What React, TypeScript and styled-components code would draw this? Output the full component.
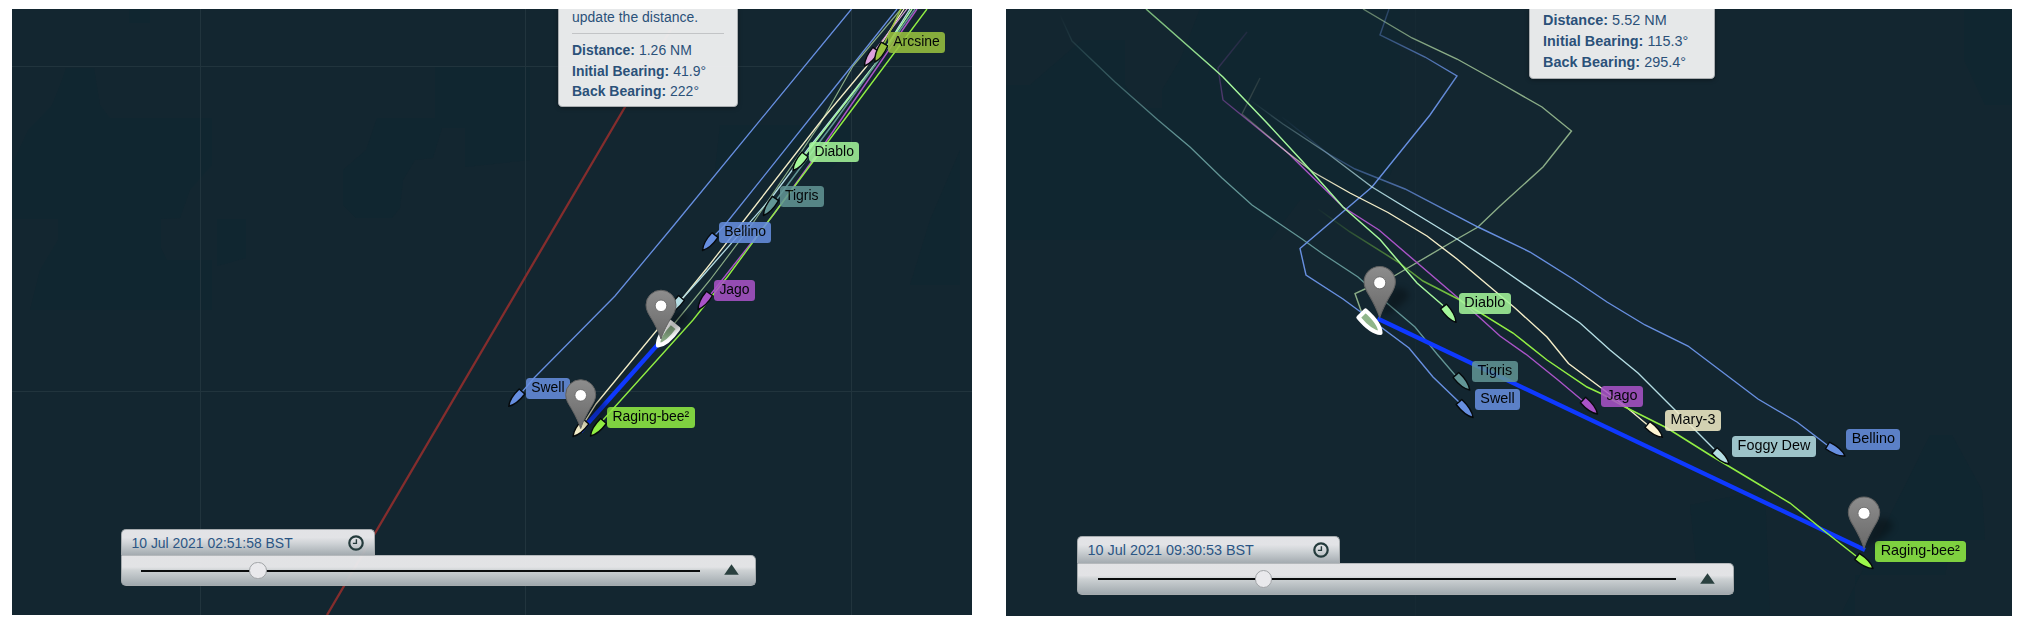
import React from "react";
import styled, { createGlobalStyle } from "styled-components";

const GlobalStyle = createGlobalStyle`
  body { margin: 0; background: #fff; }
  #root { font-family: "Liberation Sans", Arial, sans-serif; }
`;

type Point = [number, number];

interface Track {
  color: string;
  points: Point[];
  width?: number;
  fade?: [Point, Point];
  from?: number;
}

interface Boat {
  tip: Point;
  tail: Point;
  color: string;
  selected?: boolean;
}

interface Tag {
  name: string;
  x: number;
  y: number;
  w: number;
  color: string;
}

interface MapData {
  id: string;
  origin: Point;
  width: number;
  height: number;
  font: number;
  tagHeight: number;
  grid: { x: number[]; y: number[]; opacity: number };
  land: string[];
  tracks: Track[];
  ruler: [Point, Point];
  boats: Boat[];
  tags: Tag[];
  pins: Point[];
  pinScale: number;
  popup: { x: number; width: number; height: number; line: number; note?: string; rows: [string, string][] };
  timeline: { x: number; y: number; width: number; tab: number; tabHeight: number; barHeight: number; inset: number; trackEnd: number; knob: number; time: string };
}

const C = {
  blue: "#678fe0",
  cream: "#f3edc8",
  sage: "#8bad87",
  ice: "#b4dde3",
  mint: "#a5f79b",
  teal: "#629595",
  purple: "#aa53c8",
  lime: "#91ee43",
  olive: "#99c23f",
  pink: "#dda1dc",
};

const leftMap: MapData = {
  id: "west",
  origin: [12, 9],
  width: 960,
  height: 606,
  font: 13.95,
  tagHeight: 20.5,
  grid: { x: [200.5, 525.5, 851.5], y: [66.5, 391.5], opacity: 0.85 },
  land: [
    "M62 80 L66 68 H94 L100 105 L110 118 H212 V165 L190 190 L180 218 L161 219 V248 L167 260 H212 V310 H30 L40 270 L58 240 V219 H12 V165 L28 130 L40 118 L52 105Z",
    "M217 219 H246 V258 L217 266Z",
    "M377 118 H435 V67 H530 V160 L465 167 V128 L442 128 L433 158 L415 160 L403 180 L400 208 L392 218 H356 L343 205 V170 L366 150Z",
    "M129 9 H150 V23 H129Z",
    "M720 125 H850 V150 L830 170 H715Z M930 220 L960 150 V285 H910Z",
  ],
  tracks: [
    { color: "#842d2d", width: 2.3, points: [[683, 9], [625, 107], [327, 615]] },
    { color: C.blue, width: 1.3, points: [[851.5, 9], [670, 230], [615, 296], [534, 378], [522, 392]] },
    { color: C.blue, width: 1.3, points: [[897, 9], [847, 72], [724, 226], [715, 235]] },
    { color: C.sage, width: 1.2, points: [[901, 9], [853, 66], [820, 124], [753, 223], [710, 280], [674, 324]] },
    { color: C.cream, width: 1.3, points: [[904, 9], [866, 67], [821, 121], [742, 223], [707, 268], [657, 330], [596, 404], [584, 423]] },
    { color: C.pink, width: 1.2, points: [[907, 9], [875, 50]] },
    { color: C.olive, width: 1.5, points: [[901, 9], [884, 44]] },
    { color: C.ice, width: 1.3, points: [[910, 9], [876, 63], [808, 149], [772, 197], [700, 279], [681, 300]] },
    { color: C.mint, width: 1.4, points: [[912, 9], [874, 66], [805, 155]] },
    { color: C.teal, width: 1.5, points: [[915, 9], [833, 124], [777, 199]] },
    { color: C.purple, width: 1.4, points: [[917, 9], [825, 143], [774, 214], [711, 294]] },
    { color: C.lime, width: 1.4, points: [[927, 9], [827, 143], [767, 223], [728, 276], [693, 320], [603, 420]] },
  ],
  ruler: [[580.5, 431.5], [660, 342]],
  boats: [
    { tip: [864.5, 66], tail: [876, 49.5], color: C.pink },
    { tip: [875, 62], tail: [884.5, 44], color: C.olive },
    { tip: [793, 170.5], tail: [805, 154.5], color: C.mint },
    { tip: [763.5, 215.5], tail: [775.5, 198.5], color: C.teal },
    { tip: [702.5, 250.5], tail: [715, 235], color: C.blue },
    { tip: [698, 309.5], tail: [709.5, 293.5], color: C.purple },
    { tip: [668, 314], tail: [681.5, 298], color: C.ice },
    { tip: [658, 345.5], tail: [674.5, 325.5], color: C.sage, selected: true },
    { tip: [573, 436.5], tail: [586, 421.5], color: C.cream },
    { tip: [590.5, 436], tail: [603.5, 421], color: C.lime },
    { tip: [508.7, 406.3], tail: [522, 391.5], color: C.blue },
  ],
  tags: [
    { name: "Arcsine", x: 888, y: 32.3, w: 57, color: C.olive },
    { name: "Diablo", x: 809, y: 141.8, w: 50.3, color: C.mint },
    { name: "Tigris", x: 779.5, y: 186.2, w: 44.5, color: C.teal },
    { name: "Bellino", x: 719, y: 222, w: 52.3, color: C.blue },
    { name: "Jago", x: 714, y: 280, w: 41, color: C.purple },
    { name: "Swell", x: 526, y: 378, w: 43.8, color: C.blue },
    { name: "Raging-bee²", x: 607, y: 407.2, w: 87.8, color: C.lime },
  ],
  pins: [[661, 339], [580.7, 428.5]],
  pinScale: 1,
  popup: {
    x: 558,
    width: 180,
    height: 98,
    line: 20.2,
    note: "update the distance.",
    rows: [["Distance:", "1.26 NM"], ["Initial Bearing:", "41.9°"], ["Back Bearing:", "222°"]],
  },
  timeline: { x: 121, y: 529, width: 635, tab: 254, tabHeight: 26, barHeight: 31, inset: 19, trackEnd: 559, knob: 117, time: "10 Jul 2021 02:51:58 BST" },
};

const rightMap: MapData = {
  id: "east",
  origin: [1006, 9],
  width: 1006,
  height: 607,
  font: 14.4,
  tagHeight: 21,
  grid: { x: [1415.5], y: [], opacity: 0.2 },
  land: [
    "M1082 40 H1125 V85 L1140 108 H1162 V90 L1180 60 L1200 9 H1400 V150 L1380 200 H1300 L1270 240 H1006 V85 H1030Z",
    "M1964 60 V9 H2012 V105 H1985Z",
    "M1930 435 H1952 L1982 490 L1985 540 H1952 L1945 575 H1855 V615 H1770 L1765 490 L1690 505 L1700 600 H1740 V616 H1840Z",
  ],
  tracks: [
    { color: C.teal, width: 1.3, fade: [[1060, 13], [1180, 138]], points: [[1060, 15], [1072, 41], [1115, 82], [1158, 120], [1190, 147], [1222, 178], [1252, 205], [1302, 239], [1323, 254], [1358, 277], [1388, 304], [1415, 327], [1437, 354], [1455, 375]] },
    { color: C.sage, width: 1.4, fade: [[1300, -50], [1440, 50]], from: 0.3, points: [[1363, 9], [1412, 38], [1457, 59], [1500, 83], [1542, 107], [1571.5, 131], [1543, 167], [1500, 206], [1478, 227], [1457, 239], [1395, 275.5], [1365, 289], [1355, 293.5], [1361.5, 312]] },
    { color: C.blue, width: 1.4, fade: [[1385, 5], [1450, 100]], from: 0.25, points: [[1389, 9], [1380, 35], [1425, 57], [1457, 76], [1430, 115], [1372, 187], [1300, 248.5], [1306, 275], [1343, 299], [1360, 311.5], [1409, 348], [1433, 377], [1459, 402]] },
    { color: C.purple, width: 1.4, fade: [[1225, 25], [1295, 160]], points: [[1247, 32], [1218, 68], [1223, 100], [1288, 153], [1343, 207], [1379, 230], [1457, 297], [1500, 336], [1527, 355], [1558, 380], [1583, 401]] },
    { color: C.cream, width: 1.4, fade: [[1240, 75], [1345, 190]], points: [[1260, 78], [1242, 114], [1288, 153], [1313, 172], [1350, 193], [1388, 212.5], [1427, 236], [1457, 259], [1515, 308], [1547, 337], [1568.5, 363.5], [1602, 388.5], [1625, 406], [1647, 424.5]] },
    { color: C.ice, width: 1.4, fade: [[1250, 98], [1400, 205]], points: [[1250, 100], [1283, 124], [1327, 153], [1372, 187], [1457, 239], [1500, 267.5], [1580, 323], [1610, 350], [1638, 373], [1667, 402], [1714, 449]] },
    { color: C.blue, width: 1.4, fade: [[1280, 115], [1470, 210]], points: [[1282, 117], [1327, 153], [1355, 169], [1405, 189], [1478, 227], [1530, 252], [1573, 279], [1607, 302], [1645, 325], [1688, 346], [1758, 399], [1797, 422], [1827, 445]] },
    { color: C.mint, width: 1.5, fade: [[1050, -60], [1225, 80]], from: 0.3, points: [[1146, 9], [1213, 68], [1223, 77], [1267, 123], [1303, 162], [1343, 207], [1380, 239.5], [1417, 283], [1443, 305.5]] },
    { color: C.lime, width: 1.5, fade: [[1316, 207], [1480, 325]], points: [[1318, 209], [1350, 232], [1398, 262], [1423, 281], [1458, 299], [1513, 333], [1547, 360], [1587, 387], [1602, 394], [1625, 407], [1667, 428], [1710, 455], [1760, 485], [1790, 503], [1823, 530], [1856, 556]] },
  ],
  ruler: [[1377.5, 318.5], [1865, 550]],
  boats: [
    { tip: [1380.5, 333], tail: [1362, 314], color: "#8fb58a", selected: true },
    { tip: [1456, 322.3], tail: [1443.5, 306.5], color: C.mint },
    { tip: [1469.7, 390], tail: [1456, 375], color: C.teal },
    { tip: [1473, 417.5], tail: [1459, 402], color: C.blue },
    { tip: [1597.5, 414], tail: [1583, 400], color: C.purple },
    { tip: [1662.5, 437.3], tail: [1647.5, 424.5], color: "#fdf5d3" },
    { tip: [1729, 464], tail: [1714.5, 450.5], color: C.ice },
    { tip: [1845, 456], tail: [1827.5, 445.5], color: C.blue },
    { tip: [1873, 568.5], tail: [1857, 556.5], color: "#9cf84c" },
  ],
  tags: [
    { name: "Diablo", x: 1459, y: 293, w: 51.5, color: C.mint },
    { name: "Tigris", x: 1472, y: 361, w: 45.7, color: C.teal },
    { name: "Swell", x: 1475, y: 389, w: 45, color: C.blue },
    { name: "Jago", x: 1601, y: 386, w: 42, color: C.purple },
    { name: "Mary-3", x: 1665, y: 410, w: 56, color: "#f3edc8" },
    { name: "Foggy Dew", x: 1732, y: 436, w: 84, color: C.ice },
    { name: "Bellino", x: 1846.3, y: 429.3, w: 54, color: C.blue },
    { name: "Raging-bee²", x: 1875, y: 541, w: 90.5, color: C.lime },
  ],
  pins: [[1379.7, 317.5], [1864, 548]],
  pinScale: 1.045,
  popup: {
    x: 1529,
    width: 186,
    height: 69.5,
    line: 21,
    rows: [["Distance:", "5.52 NM"], ["Initial Bearing:", "115.3°"], ["Back Bearing:", "295.4°"]],
  },
  timeline: { x: 1077, y: 536, width: 657, tab: 263, tabHeight: 27, barHeight: 32, inset: 20, trackEnd: 578, knob: 165.5, time: "10 Jul 2021 09:30:53 BST" },
};

const Page = styled.main`
  display: flex;
  align-items: flex-start;
  gap: 34px;
  box-sizing: border-box;
  width: 2018px;
  height: 620px;
  padding: 9px 6px 0 12px;
  overflow: hidden;
`;

const MapPanel = styled.section<{ $w: number; $h: number; $font: number }>`
  position: relative;
  flex: none;
  width: ${(p) => p.$w}px;
  height: ${(p) => p.$h}px;
  overflow: hidden;
  background: #132630;
  font-size: ${(p) => p.$font}px;
`;

const Chart = styled.svg`
  position: absolute;
  inset: 0;
  display: block;
  width: 100%;
  height: 100%;
`;

const BoatTag = styled.span<{ $x: number; $y: number; $w: number; $h: number; $color: string }>`
  position: absolute;
  left: ${(p) => p.$x}px;
  top: ${(p) => p.$y}px;
  display: flex;
  justify-content: center;
  box-sizing: border-box;
  width: ${(p) => p.$w}px;
  height: ${(p) => p.$h}px;
  line-height: ${(p) => p.$h - 1.5}px;
  border-radius: 3.5px;
  background: ${(p) => p.$color};
  color: #000;
  white-space: nowrap;
  opacity: 0.86;
`;

const Popup = styled.aside<{ $x: number; $w: number; $h: number; $line: number }>`
  position: absolute;
  top: 0;
  left: ${(p) => p.$x}px;
  display: flex;
  flex-direction: column;
  justify-content: flex-end;
  box-sizing: border-box;
  width: ${(p) => p.$w}px;
  height: ${(p) => p.$h}px;
  padding: 0 13px 5px;
  border: 1px solid #a9adb0;
  border-top: 0;
  border-bottom-width: 1.5px;
  border-radius: 0 0 4.5px 4.5px;
  background: rgba(237, 238, 239, 0.97);
  box-shadow: 0 1px 4px rgba(0, 0, 0, 0.35);
  color: #2b5179;
  line-height: ${(p) => p.$line}px;
  letter-spacing: 0.03px;
  white-space: nowrap;
`;

const PopupNote = styled.div`
  margin-bottom: 6.4px;
  padding-bottom: 5.5px;
  border-bottom: 1px solid #c2c4c6;
`;

const Timeline = styled.div<{ $x: number; $y: number; $w: number }>`
  position: absolute;
  left: ${(p) => p.$x}px;
  top: ${(p) => p.$y}px;
  display: flex;
  flex-direction: column;
  align-items: flex-start;
  width: ${(p) => p.$w}px;
`;

const TimeTab = styled.div<{ $w: number; $h: number }>`
  display: flex;
  align-items: center;
  justify-content: space-between;
  box-sizing: border-box;
  width: ${(p) => p.$w}px;
  height: ${(p) => p.$h}px;
  padding: 0 10px 0 9.5px;
  border: 1px solid #a6abae;
  border-bottom: 0;
  border-radius: 5px 5px 0 0;
  background: linear-gradient(rgba(233, 233, 236, 0.97) 30%, rgba(211, 215, 218, 0.97) 55%, rgba(168, 175, 180, 0.97));
  color: #2b5584;
`;

const SliderBar = styled.div<{ $h: number; $inset: number }>`
  display: flex;
  align-items: center;
  box-sizing: border-box;
  width: 100%;
  height: ${(p) => p.$h}px;
  padding-left: ${(p) => p.$inset}px;
  border: 1px solid #a6abae;
  border-top: 1.5px solid #b5b9bc;
  border-radius: 0 5px 5px 5px;
  background: linear-gradient(rgba(233, 233, 235, 0.97) 38%, rgba(211, 215, 217, 0.97) 50%, rgba(165, 173, 178, 0.97));
`;

const SliderTrack = styled.div<{ $w: number }>`
  display: flex;
  align-items: center;
  width: ${(p) => p.$w}px;
  height: 2px;
  background: #0a0c0d;
`;

const Knob = styled.i<{ $left: number }>`
  box-sizing: border-box;
  width: 17.5px;
  height: 17.5px;
  margin-left: ${(p) => p.$left - 8.7}px;
  flex: none;
  border: 1px solid #a0a3a6;
  border-radius: 50%;
  background: #e9e9ec;
`;

const Expand = styled.svg`
  display: block;
  width: 15px;
  height: 11px;
  margin: 0 0 2px 23.5px;
`;

const Clock = styled.svg`
  display: block;
  width: 16px;
  height: 16px;
`;

const toPath = (pts: Point[]) => "M" + pts.map((p) => p.join(" ")).join("L");

function BoatMark({ boat }: { boat: Boat }) {
  const dx = boat.tip[0] - boat.tail[0];
  const dy = boat.tip[1] - boat.tail[1];
  const angle = (Math.atan2(dy, dx) * 180) / Math.PI;
  const len = Math.hypot(dx, dy);
  const half = boat.selected ? 5 : 3.8;
  const d = `M0 0 C-4 ${-half * 0.75} ${-len * 0.5} ${-half * 1.2} ${-len} ${-half} V${half} C${-len * 0.5} ${half * 1.2} -4 ${half * 0.75} 0 0Z`;
  return (
    <path
      d={d}
      transform={`translate(${boat.tip[0]} ${boat.tip[1]}) rotate(${angle})`}
      fill={boat.color}
      stroke={boat.selected ? "#fff" : "#05090b"}
      strokeWidth={boat.selected ? 4.2 : 1.4}
      strokeLinejoin="round"
    />
  );
}

function TrackLine({ track, id }: { track: Track; id: string }) {
  const { fade } = track;
  return (
    <>
      {fade && (
        <linearGradient id={id} gradientUnits="userSpaceOnUse" x1={fade[0][0]} y1={fade[0][1]} x2={fade[1][0]} y2={fade[1][1]}>
          <stop offset="0" stopColor={track.color} stopOpacity={track.from ?? 0} />
          <stop offset="1" stopColor={track.color} />
        </linearGradient>
      )}
      <path d={toPath(track.points)} fill="none" stroke={fade ? `url(#${id})` : track.color} strokeWidth={track.width ?? 1} />
    </>
  );
}

function RaceMap({ data }: { data: MapData }) {
  const [ox, oy] = data.origin;
  const view = `${ox} ${oy} ${data.width} ${data.height}`;
  const { popup, timeline } = data;
  const raised = data.id === "east" ? data.tracks.slice(-1) : [];
  const base = data.id === "east" ? data.tracks.slice(0, -1) : data.tracks;
  return (
    <MapPanel $w={data.width} $h={data.height} $font={data.font}>
      <Chart viewBox={view}>
        {data.land.map((d) => (
          <path key={d} d={d} fill="#0f2631" opacity="0.6" />
        ))}
        <g stroke="#243740" strokeWidth="1" opacity={data.grid.opacity}>
          {data.grid.x.map((x) => (
            <line key={x} x1={x} x2={x} y1={oy} y2={oy + data.height} />
          ))}
          {data.grid.y.map((y) => (
            <line key={y} x1={ox} x2={ox + data.width} y1={y} y2={y} />
          ))}
        </g>
        {base.map((t, i) => (
          <TrackLine key={i} track={t} id={`${data.id}-${i}`} />
        ))}
        <path d={toPath(data.ruler)} stroke="#0f39ff" strokeWidth="4.3" />
        {raised.map((t, i) => (
          <TrackLine key={i} track={t} id={`${data.id}-top-${i}`} />
        ))}
        {data.boats.map((b, i) => (
          <BoatMark key={i} boat={b} />
        ))}
      </Chart>
      {data.tags.map((t) => (
        <BoatTag key={t.name} $x={t.x - ox} $y={t.y - oy} $w={t.w} $h={data.tagHeight} $color={t.color}>
          {t.name}
        </BoatTag>
      ))}
      <Chart viewBox={view}>
        <defs>
          <linearGradient id={`${data.id}-pin`} x1="0" y1="0" x2="0" y2="1">
            <stop offset="0" stopColor="#8d8d8d" />
            <stop offset="1" stopColor="#696969" />
          </linearGradient>
          <filter id={`${data.id}-soft`} x="-50%" y="-50%" width="200%" height="200%">
            <feGaussianBlur stdDeviation="3.2" />
          </filter>
        </defs>
        {data.pins.map(([x, y]) => (
          <g key={x} transform={`translate(${x} ${y}) scale(${data.pinScale})`}>
            <path d="M0 0 L10 -25 Q22 -33 28 -22 Q27 -13 0 0Z" fill="#000" opacity="0.3" filter={`url(#${data.id}-soft)`} />
            <path
              d="M0 0 C-3 -9 -6.5 -15 -10 -21 C-12.5 -25 -15 -29 -15 -34 A15 14.8 0 0 1 15 -34 C15 -29 12.5 -25 10 -21 C6.5 -15 3 -9 0 0Z"
              fill={`url(#${data.id}-pin)`}
              stroke="#626262"
              strokeWidth="1"
            />
            <circle cx="0" cy="-33.2" r="5.8" fill="#fff" stroke="#656565" strokeWidth="0.8" />
          </g>
        ))}
      </Chart>
      <Popup $x={popup.x - ox} $w={popup.width} $h={popup.height} $line={popup.line}>
        {popup.note && <PopupNote>{popup.note}</PopupNote>}
        {popup.rows.map(([label, value]) => (
          <div key={label}>
            <b>{label}</b> {value}
          </div>
        ))}
      </Popup>
      <Timeline $x={timeline.x - ox} $y={timeline.y - oy} $w={timeline.width}>
        <TimeTab $w={timeline.tab} $h={timeline.tabHeight}>
          <span>{timeline.time}</span>
          <Clock viewBox="0 0 16 16" fill="none" stroke="#243b3c">
            <circle cx="8" cy="8" r="6.7" strokeWidth="2.2" />
            <path d="M8.4 4.2 V8.4 H4.9" strokeWidth="1.4" />
          </Clock>
        </TimeTab>
        <SliderBar $h={timeline.barHeight} $inset={timeline.inset}>
          <SliderTrack $w={timeline.trackEnd}>
            <Knob $left={timeline.knob} />
          </SliderTrack>
          <Expand viewBox="0 0 15 11">
            <path d="M7.5 0.3 L14.8 10.7 H0.2Z" fill="#2a403f" />
          </Expand>
        </SliderBar>
      </Timeline>
    </MapPanel>
  );
}

export default function App() {
  return (
    <>
      <GlobalStyle />
      <Page>
        <RaceMap data={leftMap} />
        <RaceMap data={rightMap} />
      </Page>
    </>
  );
}
